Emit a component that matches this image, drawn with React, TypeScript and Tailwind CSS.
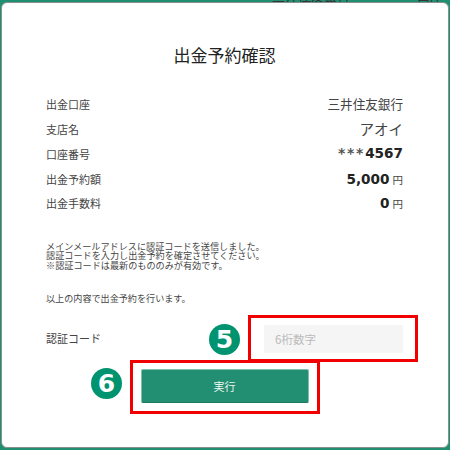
const rows = [
  { label: "出金口座", value: "三井住友銀行" },
  { label: "支店名", value: "アオイ", big: true },
  { label: "口座番号", mask: "***", value: "4567", bold: true },
  { label: "出金予約額", value: "5,000", bold: true, unit: "円" },
  { label: "出金手数料", value: "0", bold: true, unit: "円" },
];

function Badge({ n, className }: { n: string; className: string }) {
  return (
    <div
      className={`absolute flex h-[31px] w-[31px] items-center justify-center rounded-full bg-[#00936f] text-[25px] font-bold leading-none text-white font-['DejaVu_Sans',sans-serif] ${className}`}
    >
      {n}
    </div>
  );
}

export default function App() {
  return (
    <div className="relative h-[450px] w-[450px] overflow-hidden bg-[#1f8f72] px-[1px] pt-[2px] font-['Noto_Sans_CJK_JP',sans-serif]">
      {/* page behind the modal, only the bottom of its text shows */}
      <span className="absolute left-[272px] top-[-11px] text-[13px] leading-[13px] text-[#333]">三井住友銀行</span>
      <span className="absolute left-[417px] top-[-11px] text-[13px] leading-[13px] text-[#333]">口座番号</span>

      <div className="relative flex h-[446px] flex-col rounded-[6px] border border-[#8a908d] bg-white pl-[44px] pr-[45px] pt-[41px] text-[#444]">
        <h1 className="text-center text-[17px] leading-[22px] text-[#222]">出金予約確認</h1>

        <div className="mt-[26px] flex flex-col">
          {rows.map((row) => (
            <div key={row.label} className="flex h-[24.8px] items-center justify-between text-[11px]">
              <span>{row.label}</span>
              <span className="flex items-baseline gap-[3px]">
                <span
                  className={
                    row.bold
                      ? "text-[13.6px] font-bold text-[#222] font-['DejaVu_Sans',sans-serif]"
                      : row.big
                        ? "text-[14.5px]"
                        : "text-[12.6px]"
                  }
                >
                  {row.mask && <span className="text-[14px] tracking-[1.7px] text-[#555]">{row.mask}</span>}
                  {row.value}
                </span>
                {row.unit && <span className="text-[10.5px]">{row.unit}</span>}
              </span>
            </div>
          ))}
        </div>

        <p className="mt-[26px] text-[9.15px] leading-[9.5px]">
          メインメールアドレスに認証コードを送信しました。
          <br />
          認証コードを入力し出金予約を確定させてください。
          <br />
          ※認証コードは最新のもののみが有効です。
        </p>
        <p className="mt-[21px] text-[9.1px] leading-[14px]">以上の内容で出金予約を行います。</p>

        <div className="mt-[20px] flex items-center justify-between">
          <label className="pb-[2px] text-[11px]">認証コード</label>
          <input
            placeholder="6桁数字"
            className="h-[28px] w-[139px] bg-[#f5f5f5] px-[11px] text-[11.5px] placeholder:text-[#bbb] outline-none"
          />
        </div>

        <button className="mx-auto mt-[16px] flex h-[34px] w-[168px] items-center justify-center rounded-[2px] border border-[#7fbfab] border-b-[#1a7a5f] bg-[#238f72] text-[11px] text-[#e8f5f0]">
          実行
        </button>
      </div>

      <div className="absolute left-[248px] top-[315px] h-[47px] w-[170px] border-[3px] border-[#f00000]" />
      <div className="absolute left-[130px] top-[360px] h-[54px] w-[190px] border-[3px] border-[#f00000]" />
      <Badge n="5" className="left-[209px] top-[324px]" />
      <Badge n="6" className="left-[91px] top-[368px]" />
    </div>
  );
}
